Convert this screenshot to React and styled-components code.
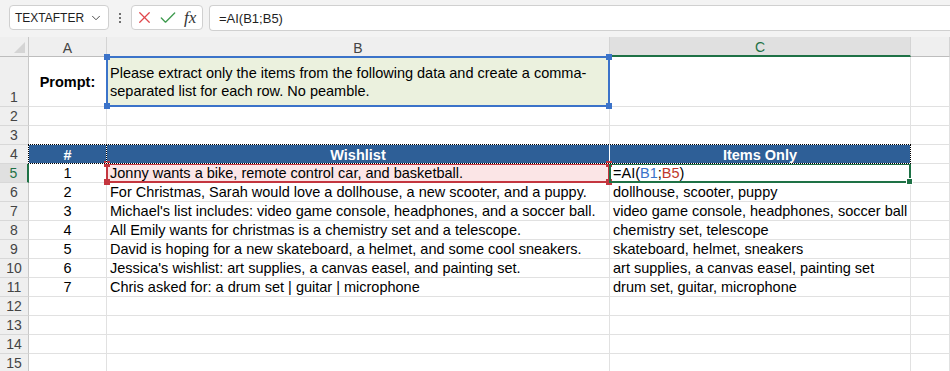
import { Fragment } from "react";
import styled, { createGlobalStyle } from "styled-components";
import { X, Check, ChevronDown } from "lucide-react";

const GlobalStyle = createGlobalStyle`
  html, body {
    margin: 0;
    padding: 0;
    background: #ffffff;
  }
  body {
    font-family: "Liberation Sans", Arial, sans-serif;
    overflow: hidden;
  }
`;

const Toolbar = styled.div`
  display: flex;
  align-items: flex-start;
  height: 37px;
  box-sizing: border-box;
  padding: 5px 0 0 9px;
  background: #f3f3f3;
`;

const NameBox = styled.div`
  width: 100px;
  height: 25px;
  box-sizing: border-box;
  border: 1px solid #d0d0d0;
  border-radius: 4px;
  background: #fff;
  display: flex;
  align-items: center;
  justify-content: space-between;
  padding: 0 5px 0 5px;
  font-size: 12px;
  color: #1f1f1f;
`;

const Kebab = styled.div`
  width: 22px;
  height: 25px;
  display: flex;
  flex-direction: column;
  align-items: center;
  justify-content: center;
  gap: 2px;

  span {
    width: 2px;
    height: 2px;
    background: #444;
    border-radius: 1px;
  }
`;

const ActionBox = styled.div`
  width: 72px;
  height: 25px;
  box-sizing: border-box;
  border: 1px solid #d0d0d0;
  border-radius: 4px;
  background: #fff;
  display: flex;
  align-items: center;
  padding-left: 3px;
  gap: 4px;
`;

const Fx = styled.span`
  font-family: "Liberation Serif", "Times New Roman", serif;
  font-style: italic;
  font-size: 17px;
  color: #333;
  margin-left: 2px;
`;

const FormulaBox = styled.div`
  flex: 1;
  height: 26px;
  margin-left: 6px;
  box-sizing: border-box;
  border: 1px solid #d0d0d0;
  border-right: none;
  border-radius: 4px 0 0 4px;
  background: #fff;
  display: flex;
  align-items: center;
  padding-left: 9px;
  font-size: 13px;
  color: #1f1f1f;
`;

const Sheet = styled.div`
  position: relative;
  display: grid;
  grid-template-columns: 29px 78px 503px 301px 1fr;
  grid-template-rows: 20px 50px repeat(14, 19px);
  font-size: 14.5px;
`;

const Corner = styled.div`
  background: #efefef;
  border-right: 1px solid #c8c8c8;
  border-bottom: 1px solid #bdbdbd;
  box-sizing: border-box;
  display: flex;
  align-items: flex-end;
  justify-content: flex-end;
  padding: 0 3px 3px 0;
`;

const ColHead = styled.div`
  box-sizing: border-box;
  background: ${(p) => (p.$active ? "#e0e0e0" : "#efefef")};
  color: ${(p) => (p.$active ? "#1e7145" : "#444")};
  border-right: 1px solid #d4d4d4;
  border-bottom: ${(p) => (p.$active ? "2px solid #1e7145" : "1px solid #bdbdbd")};
  display: flex;
  align-items: center;
  justify-content: center;
  font-size: 14px;
  padding-top: 2px;
`;

const RowHead = styled.div`
  box-sizing: border-box;
  background: ${(p) => (p.$active ? "#e0e0e0" : "#efefef")};
  color: ${(p) => (p.$active ? "#1e7145" : "#444")};
  border-right: ${(p) => (p.$active ? "2px solid #1e7145" : "1px solid #c8c8c8")};
  border-bottom: 1px solid #d8d8d8;
  display: flex;
  align-items: flex-end;
  justify-content: center;
  font-size: 14px;
  line-height: 18px;
`;

const Cell = styled.div`
  box-sizing: border-box;
  border-right: 1px solid ${(p) => p.$line || "#e1e1e1"};
  border-bottom: 1px solid #e1e1e1;
  background: ${(p) => p.$bg || "transparent"};
  color: ${(p) => p.$color || "#000"};
  font-weight: ${(p) => (p.$bold ? 700 : 400)};
  display: flex;
  align-items: ${(p) => p.$valign || "flex-end"};
  justify-content: ${(p) => p.$align || "flex-start"};
  padding: 0 3px;
  line-height: 18px;
  white-space: ${(p) => (p.$wrap ? "normal" : "nowrap")};
`;

const HeadCell = styled(Cell)`
  background: #2e5f97;
  color: #fff;
  font-weight: 700;
  justify-content: center;
  border-bottom: none;
`;

const RangeBox = styled.div`
  position: absolute;
  grid-row: ${(p) => p.$row};
  grid-column: ${(p) => p.$col};
  top: -1px;
  left: -1px;
  right: 0;
  bottom: 0;
  border: 2px solid ${(p) => p.$color};
  pointer-events: none;
  z-index: 2;
`;

const Handle = styled.span`
  position: absolute;
  width: 6px;
  height: 6px;
  background: ${(p) => p.$color};
  ${(p) => (p.$top ? "top: -4px;" : "bottom: -4px;")}
  ${(p) => (p.$left ? "left: -4px;" : "right: -4px;")}
`;

const FillHandle = styled.span`
  position: absolute;
  right: -4px;
  bottom: -4px;
  width: 5px;
  height: 5px;
  background: #1e7145;
  border: 1px solid #fff;
`;

const Ants = styled.div`
  position: absolute;
  grid-row: ${(p) => p.$row};
  grid-column: ${(p) => p.$col};
  top: -1px;
  left: -1px;
  right: 0;
  bottom: 0;
  pointer-events: none;
  z-index: 3;
  background:
    repeating-linear-gradient(90deg, #000 0 1px, #fff 1px 2px) top / 100% 1px no-repeat,
    repeating-linear-gradient(90deg, #000 0 1px, #fff 1px 2px) bottom / 100% 1px no-repeat,
    repeating-linear-gradient(0deg, #000 0 1px, #fff 1px 2px) left / 1px 100% no-repeat,
    repeating-linear-gradient(0deg, #000 0 1px, #fff 1px 2px) right / 1px 100% no-repeat;
`;

const Ref = styled.span`
  color: ${(p) => p.$c};
`;

const wishlist = [
  ["Jonny wants a bike, remote control car, and basketball.", null],
  ["For Christmas, Sarah would love a dollhouse, a new scooter, and a puppy.", "dollhouse, scooter, puppy"],
  ["Michael's list includes: video game console, headphones, and a soccer ball.", "video game console, headphones, soccer ball"],
  ["All Emily wants for christmas is a chemistry set and a telescope.", "chemistry set, telescope"],
  ["David is hoping for a new skateboard, a helmet, and some cool sneakers.", "skateboard, helmet, sneakers"],
  ["Jessica's wishlist: art supplies, a canvas easel, and painting set.", "art supplies, a canvas easel, painting set"],
  ["Chris asked for: a drum set | guitar | microphone", "drum set, guitar, microphone"],
];

const Formula = () => (
  <>
    =AI(<Ref $c="#3b73c9">B1</Ref>;<Ref $c="#c0392b">B5</Ref>)
  </>
);

const EmptyRow = ({ n }) => (
  <>
    <RowHead>{n}</RowHead>
    <Cell />
    <Cell />
    <Cell />
    <Cell />
  </>
);

function App() {
  return (
    <>
      <GlobalStyle />
      <Toolbar>
        <NameBox>
          <span>TEXTAFTER</span>
          <ChevronDown size={14} strokeWidth={1.5} color="#333" />
        </NameBox>
        <Kebab>
          <span />
          <span />
          <span />
        </Kebab>
        <ActionBox>
          <X size={19} strokeWidth={1.6} color="#e0474c" />
          <Check size={20} strokeWidth={1.6} color="#3f9b4f" />
          <Fx>fx</Fx>
        </ActionBox>
        <FormulaBox>=AI(B1;B5)</FormulaBox>
      </Toolbar>

      <Sheet>
        <Corner>
          <svg width="11" height="11" viewBox="0 0 11 11">
            <polygon points="11,0 11,11 0,11" fill="#d4d4d4" />
          </svg>
        </Corner>
        <ColHead>A</ColHead>
        <ColHead>B</ColHead>
        <ColHead $active>C</ColHead>
        <ColHead />

        <RowHead>1</RowHead>
        <Cell $bold $align="center" $valign="center">Prompt:</Cell>
        <Cell $bg="#ebf1de" $wrap $valign="center" $line="#ebf1de">
          Please extract only the items from the following data and create a comma-separated list for each row. No peamble.
        </Cell>
        <Cell />
        <Cell />

        <EmptyRow n={2} />
        <EmptyRow n={3} />

        <RowHead>4</RowHead>
        <HeadCell $line="#2e5f97">#</HeadCell>
        <HeadCell $line="#ffffff">Wishlist</HeadCell>
        <HeadCell $line="#2e5f97">Items Only</HeadCell>
        <Cell />

        {wishlist.map(([wish, items], i) => {
          const row = i + 5;
          return (
            <Fragment key={row}>
              <RowHead $active={row === 5}>{row}</RowHead>
              <Cell $align="center">{i + 1}</Cell>
              <Cell $bg={row === 5 ? "#fbe5e6" : undefined}>{wish}</Cell>
              <Cell>{items === null ? <Formula /> : items}</Cell>
              <Cell />
            </Fragment>
          );
        })}

        {[12, 13, 14, 15].map((n) => (
          <EmptyRow key={n} n={n} />
        ))}

        <RangeBox $row="2 / 3" $col="3 / 4" $color="#3b73c9">
          <Handle $color="#3b73c9" $top $left />
          <Handle $color="#3b73c9" $top />
          <Handle $color="#3b73c9" $left />
          <Handle $color="#3b73c9" />
        </RangeBox>
        <RangeBox $row="6 / 7" $col="3 / 4" $color="#c4363f">
          <Handle $color="#c4363f" $top $left />
          <Handle $color="#c4363f" $top />
          <Handle $color="#c4363f" $left />
          <Handle $color="#c4363f" />
        </RangeBox>
        <RangeBox $row="6 / 7" $col="4 / 5" $color="#1e7145">
          <FillHandle />
        </RangeBox>
        <Ants $row="5 / 6" $col="2 / 3" />
        <Ants $row="5 / 6" $col="3 / 5" />
      </Sheet>
    </>
  );
}

export default App;
